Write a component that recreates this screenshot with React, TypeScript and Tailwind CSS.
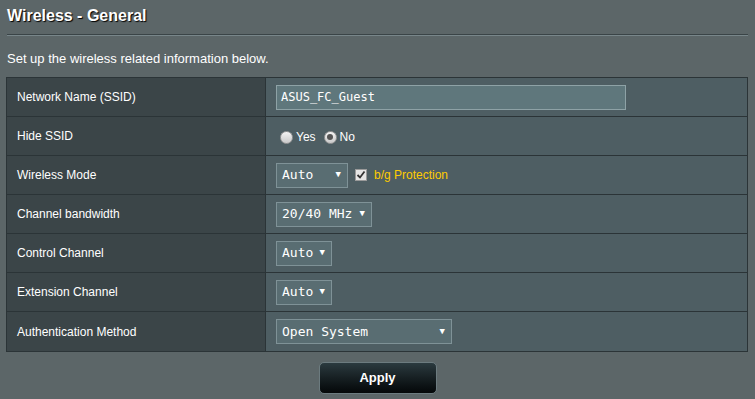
import React from 'react';

function Select({ value, width }: { value: string; width: string }) {
  return (
    <div
      className={`${width} h-[25px] flex items-center justify-between pl-[5px] pr-[6px] bg-[#596d72] border border-[#7f9297] text-white text-[13px] font-['DejaVu_Sans_Mono',monospace]`}
    >
      <span>{value}</span>
      <span className="text-[9px] ml-[6px]">▼</span>
    </div>
  );
}

function Radio({ checked }: { checked?: boolean }) {
  return (
    <span className="w-[13px] h-[13px] rounded-full bg-gradient-to-b from-[#f4f4f4] to-[#c9c9c9] border border-[#9a9a9a] flex items-center justify-center">
      {checked && <span className="w-[6px] h-[6px] rounded-full bg-[#555]" />}
    </span>
  );
}

const rows = [
  'Network Name (SSID)',
  'Hide SSID',
  'Wireless Mode',
  'Channel bandwidth',
  'Control Channel',
  'Extension Channel',
  'Authentication Method',
];

export default function App() {
  const cells: React.ReactNode[] = [
    <div className="w-[350px] h-[25px] flex items-center pl-[4px] bg-[#5f777c] border border-[#8ea2a6] text-white text-[12px] font-['DejaVu_Sans_Mono',monospace]">
      ASUS_FC_Guest
    </div>,
    <div className="flex items-center text-white text-[12px] pl-[4px] pt-[2px]">
      <Radio />
      <span className="ml-[3px] mr-[8px]">Yes</span>
      <Radio checked />
      <span className="ml-[3px]">No</span>
    </div>,
    <div className="flex items-center">
      <Select value="Auto" width="w-[72px]" />
      <span className="ml-[7px] w-[12px] h-[12px] bg-[#e6e6e6] border border-[#9a9a9a] flex items-center justify-center">
        <svg width="10" height="10" viewBox="0 0 10 10">
          <path d="M1.5 5 L4 7.5 L8.5 1.5" stroke="#333" strokeWidth="1.8" fill="none" />
        </svg>
      </span>
      <span className="ml-[7px] text-[12px] text-[#ffcc00]">b/g Protection</span>
    </div>,
    <Select value="20/40 MHz" width="w-[96px]" />,
    <Select value="Auto" width="w-[56px]" />,
    <Select value="Auto" width="w-[56px]" />,
    <Select value="Open System" width="w-[176px]" />,
  ];

  return (
    <div className="w-[755px] h-[399px] overflow-hidden bg-[#5c6668] font-['Liberation_Sans',Arial,sans-serif]">
      <div className="pl-[7px] pt-[4px] h-[34px] text-[16px] font-bold text-white [text-shadow:1px_1px_1px_#000]">
        Wireless - General
      </div>
      <div className="mx-[7px] h-[2px] border-t border-[#3a4447] border-b border-b-[#78868a]" />
      <div className="pl-[7px] pt-[13px] h-[41px] text-[13px] text-white">
        Set up the wireless related information below.
      </div>
      <div className="ml-[6px] w-[742px] border border-[#2b3437]">
        {rows.map((label, i) => (
          <div key={label} className={`flex h-[39px] ${i < rows.length - 1 ? 'border-b border-[#2b3437]' : ''}`}>
            <div className="w-[259px] bg-[#3b4548] border-r border-[#2b3437] flex items-center pl-[10px] text-[12px] text-white">
              {label}
            </div>
            <div className="flex-1 bg-[#4e5e63] flex items-center pl-[10px]">{cells[i]}</div>
          </div>
        ))}
      </div>
      <div className="flex justify-center mt-[10px]">
        <button className="w-[118px] h-[32px] rounded-[5px] bg-gradient-to-b from-[#2b3a3f] to-[#050809] border border-[#6c7b7f] text-white text-[13px] font-bold">
          Apply
        </button>
      </div>
    </div>
  );
}
